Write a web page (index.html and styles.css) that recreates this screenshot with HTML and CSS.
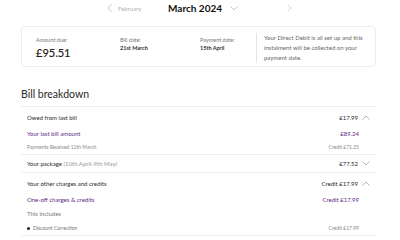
FILE: index.html
```html
<!DOCTYPE html>
<html>
<head>
<meta charset="utf-8">
<link rel="stylesheet" href="styles.css">
</head>
<body>
<div class="page">
  <nav class="monthnav">
    <div class="prev">
      <svg width="6" height="8" viewBox="0 0 6 8"><path d="M4.5 0.5 L1 4 L4.5 7.5" fill="none" stroke="#b5b5b5" stroke-width="0.8"/></svg>
      <span>February</span>
    </div>
    <div class="title">March 2024</div>
    <svg class="dd" width="8" height="5" viewBox="0 0 8 5"><path d="M0.5 0.5 L4 4 L7.5 0.5" fill="none" stroke="#b5b5b5" stroke-width="0.8"/></svg>
    <svg class="next" width="6" height="8" viewBox="0 0 6 8"><path d="M1.5 0.5 L5 4 L1.5 7.5" fill="none" stroke="#d0d0d0" stroke-width="0.8"/></svg>
  </nav>

  <section class="summary">
    <div class="col amount">
      <div class="lbl">Amount due:</div>
      <div class="big">£95.51</div>
    </div>
    <div class="col bill">
      <div class="lbl">Bill date:</div>
      <div class="val">21st March</div>
    </div>
    <div class="col pay">
      <div class="lbl">Payment date:</div>
      <div class="val">15th April</div>
    </div>
    <div class="divider"></div>
    <p class="note">Your Direct Debit is all set up and this instalment will be collected on your payment date.</p>
  </section>

  <h2 class="heading">Bill breakdown</h2>

  <div class="breakdown">
    <div class="group">
      <div class="row head"><span>Owed from last bill</span><span class="right">£17.99 <svg class="chev" width="8" height="5" viewBox="0 0 8 5"><path d="M0.5 4.5 L4 1 L7.5 4.5" fill="none" stroke="#a0a0a0" stroke-width="0.8"/></svg></span></div>
      <div class="row purple"><span>Your last bill amount</span><span class="right pr">£89.24</span></div>
      <div class="row small"><span>Payments Received 11th March</span><span class="right pr">Credit £71.25</span></div>
    </div>
    <div class="group">
      <div class="row head pkg"><span>Your package <span class="muted">(10th April-9th May)</span></span><span class="right">£77.52 <svg class="chev" width="8" height="5" viewBox="0 0 8 5"><path d="M0.5 0.5 L4 4 L7.5 0.5" fill="none" stroke="#a0a0a0" stroke-width="0.8"/></svg></span></div>
    </div>
    <div class="group last">
      <div class="row head"><span>Your other charges and credits</span><span class="right">Credit £17.99 <svg class="chev" width="8" height="5" viewBox="0 0 8 5"><path d="M0.5 4.5 L4 1 L7.5 4.5" fill="none" stroke="#a0a0a0" stroke-width="0.8"/></svg></span></div>
      <div class="row purple"><span>One-off charges &amp; credits</span><span class="right pr">Credit £17.99</span></div>
      <div class="row includes"><span>This includes</span></div>
      <div class="row small disc"><span class="bullet">Discount Correction</span><span class="right pr">Credit £17.99</span></div>
    </div>
  </div>
</div>
</body>
</html>
```

FILE: styles.css
```css
* { box-sizing: border-box; }
html, body { margin: 0; padding: 0; background: #fff; }
body { font-family: "Lato", "Open Sans", sans-serif; color: #2a2a2a; width: 400px; height: 240px; overflow: hidden; }
.page { padding: 0 24px 0 21px; }

.monthnav { display: flex; align-items: center; height: 16px; padding-left: 86px; }
.prev { display: flex; align-items: center; gap: 5px; font-size: 6px; color: #b0b0b0; width: 61px; }
.title { font-size: 10px; font-weight: 700; color: #111; width: 62px; }
.next { margin-left: 48px; }

.summary { margin-top: 10px; height: 41px; border: 1px solid #ececec; border-radius: 4px; display: flex; align-items: flex-start; padding: 10px 0 0 14px; }
.col { display: flex; flex-direction: column; }
.amount { width: 84px; }
.bill { width: 80px; }
.pay { width: 56px; }
.lbl { font-size: 5.5px; color: #777; }
.big { font-size: 11px; color: #1e1e1e; margin-top: 3px; font-weight: 400; -webkit-text-stroke: 0.2px #1e1e1e; }
.val { font-size: 5.5px; font-weight: 700; color: #333; margin-top: 2px; }
.divider { width: 1px; height: 30px; background: #e4e4e4; margin-top: -4px; }
.note { margin: -4px 0 0 7px; font-size: 6px; line-height: 10px; color: #666; width: 105px; }

.heading { font-size: 10.5px; font-weight: 400; color: #2a2a2a; margin: 21px 0 0; height: 18px; }

.breakdown { border-top: 1px solid #ececec; }
.group { border-bottom: 1px solid #ececec; padding: 0 6px; }
.row { display: flex; justify-content: space-between; align-items: center; font-size: 6px; }
.row.head { height: 20px; color: #2a2a2a; }
.row.head.pkg { height: 17px; }
.row.purple { height: 12px; color: #5e2a84; }
.row.small { height: 15px; font-size: 5px; color: #888; }
.row.includes { height: 16px; font-size: 6px; color: #777; }
.row.small.disc { height: 14px; }
.right { display: flex; align-items: center; gap: 4px; }
.pr { padding-right: 11px; }
.chev { display: block; }
.muted { color: #999; }
.bullet { display: flex; align-items: center; gap: 3px; color: #777; }
.bullet::before { content: ""; width: 3px; height: 3px; border-radius: 50%; background: #222; }
```
